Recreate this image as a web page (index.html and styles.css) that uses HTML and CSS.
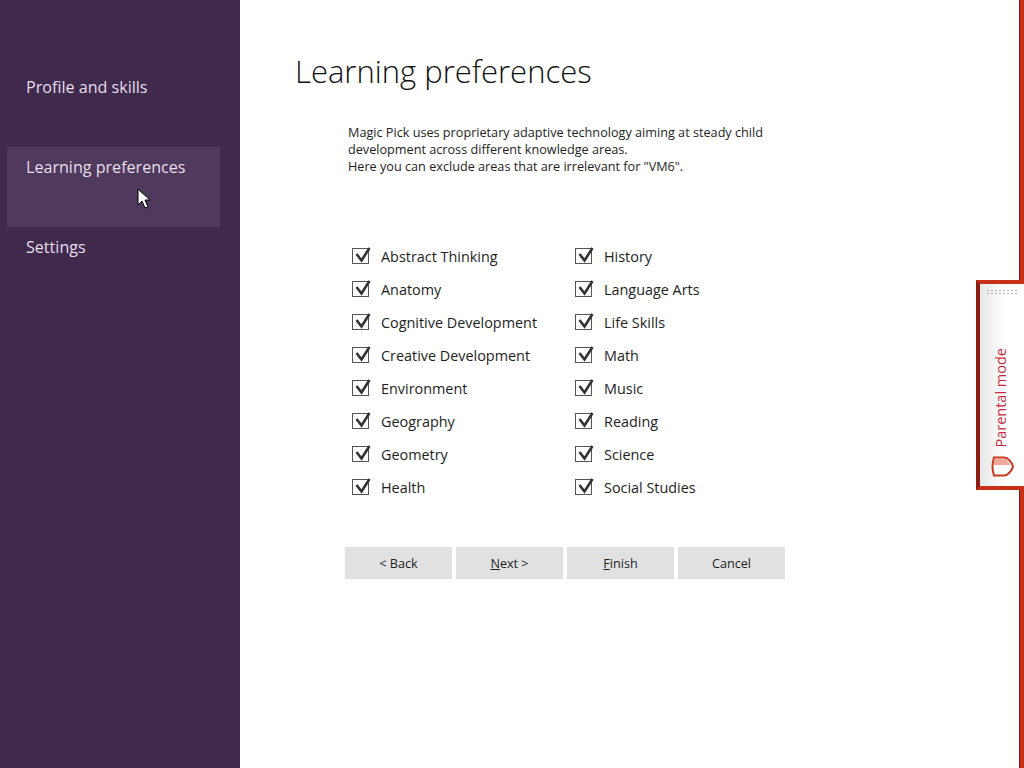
FILE: index.html
```html
<!DOCTYPE html>
<html>
    <head>
        <meta charset="UTF-8">
        <title>Learning preferences</title>
        <link rel="stylesheet" href="styles.css">
    </head>
    <body>
        <nav class="sidebar">
            <div class="nav-item">Profile and skills</div>
            <div class="nav-item active">Learning preferences</div>
            <div class="nav-item">Settings</div>
        </nav>

        <main class="content">
            <h1>Learning preferences</h1>

            <div class="wizard">
                <p class="intro">Magic Pick uses proprietary adaptive technology aiming at steady child<br>development across different knowledge areas.<br>Here you can exclude areas that are irrelevant for "VM6".</p>

                <div class="areas">
                    <label class="area"><span class="box"><svg viewBox="0 0 20 20"><path d="M3.500 8l5 6.500L16.500 2" /></svg></span>Abstract Thinking</label>
                    <label class="area"><span class="box"><svg viewBox="0 0 20 20"><path d="M3.500 8l5 6.500L16.500 2" /></svg></span>History</label>
                    <label class="area"><span class="box"><svg viewBox="0 0 20 20"><path d="M3.500 8l5 6.500L16.500 2" /></svg></span>Anatomy</label>
                    <label class="area"><span class="box"><svg viewBox="0 0 20 20"><path d="M3.500 8l5 6.500L16.500 2" /></svg></span>Language Arts</label>
                    <label class="area"><span class="box"><svg viewBox="0 0 20 20"><path d="M3.500 8l5 6.500L16.500 2" /></svg></span>Cognitive Development</label>
                    <label class="area"><span class="box"><svg viewBox="0 0 20 20"><path d="M3.500 8l5 6.500L16.500 2" /></svg></span>Life Skills</label>
                    <label class="area"><span class="box"><svg viewBox="0 0 20 20"><path d="M3.500 8l5 6.500L16.500 2" /></svg></span>Creative Development</label>
                    <label class="area"><span class="box"><svg viewBox="0 0 20 20"><path d="M3.500 8l5 6.500L16.500 2" /></svg></span>Math</label>
                    <label class="area"><span class="box"><svg viewBox="0 0 20 20"><path d="M3.500 8l5 6.500L16.500 2" /></svg></span>Environment</label>
                    <label class="area"><span class="box"><svg viewBox="0 0 20 20"><path d="M3.500 8l5 6.500L16.500 2" /></svg></span>Music</label>
                    <label class="area"><span class="box"><svg viewBox="0 0 20 20"><path d="M3.500 8l5 6.500L16.500 2" /></svg></span>Geography</label>
                    <label class="area"><span class="box"><svg viewBox="0 0 20 20"><path d="M3.500 8l5 6.500L16.500 2" /></svg></span>Reading</label>
                    <label class="area"><span class="box"><svg viewBox="0 0 20 20"><path d="M3.500 8l5 6.500L16.500 2" /></svg></span>Geometry</label>
                    <label class="area"><span class="box"><svg viewBox="0 0 20 20"><path d="M3.500 8l5 6.500L16.500 2" /></svg></span>Science</label>
                    <label class="area"><span class="box"><svg viewBox="0 0 20 20"><path d="M3.500 8l5 6.500L16.500 2" /></svg></span>Health</label>
                    <label class="area"><span class="box"><svg viewBox="0 0 20 20"><path d="M3.500 8l5 6.500L16.500 2" /></svg></span>Social Studies</label>
                </div>

                <div class="buttons">
                    <button>&lt; Back</button>
                    <button><u>N</u>ext &gt;</button>
                    <button><u>F</u>inish</button>
                    <button>Cancel</button>
                </div>
            </div>
        </main>

        <svg class="cursor" width="14" height="22" viewBox="0 0 14 22">
            <path d="M1 1v16l4-4 3 7 3-1-3-7h5z" fill="#fff" stroke="#000" stroke-width="1" />
        </svg>

        <div class="parental-tab">
            <div class="grip"></div>
            <span class="tab-label">Parental mode</span>
            <svg class="tab-icon" width="24" height="21" viewBox="0 0 24 21">
                <path d="M4 1.500h10c4 0 8 5 9 9-1 4-5 9-9 9H4c-2-6-2-12 0-18z" fill="#fff" stroke="#c8391f" stroke-width="2" />
                <path d="M5 3h9c2 0 5 3 6 6H4c0-2 0-4 1-6z" fill="#f0a898" />
            </svg>
        </div>
    </body>
</html>
```

FILE: styles.css
```css
body {
    display: flex;
    height: 768px;
    margin: 0;
    overflow: hidden;
    position: relative;
    font-family: "Open Sans", "Noto Sans", sans-serif;
    color: #1e1e1e;
    background-color: #ffffff;
}

.sidebar {
    width: 240px;
    flex-shrink: 0;
    box-sizing: border-box;
    padding: 67px 20px 0 7px;
    background-color: #3f2a4e;
}

.nav-item {
    height: 80px;
    box-sizing: border-box;
    padding: 8px 0 0 19px;
    font-size: 16.1px;
    line-height: 24px;
    color: #e6dfea;
}

.nav-item.active {
    background-color: #4f3a5e;
}

.content {
    flex: 1;
    box-sizing: border-box;
    padding: 49px 0 0 55px;
    border-right: 4px solid #c8301a;
    box-shadow: inset -1px 0 0 #7a1a0c;
}

h1 {
    margin: 0;
    font-size: 31px;
    font-weight: 300;
    line-height: 44px;
    color: #111111;
}

.wizard {
    width: 440px;
    margin-left: 50px;
}

.intro {
    margin: 31px 0 0 3px;
    font-size: 12.66px;
    line-height: 17px;
}

.areas {
    display: grid;
    grid-template-columns: 223px 1fr;
    grid-auto-rows: 33px;
    margin: 65px 0 0 7px;
}

.area {
    display: flex;
    align-items: center;
    gap: 12px;
    font-size: 14.4px;
}

.box {
    width: 15px;
    height: 14px;
    flex-shrink: 0;
    position: relative;
    margin-top: -2px;
    border: 1px solid #555555;
}

.box svg {
    position: absolute;
    left: 0;
    top: -3px;
    width: 20px;
    height: 20px;
    fill: none;
    stroke: #333333;
    stroke-width: 2.6;
}

.buttons {
    display: flex;
    gap: 4px;
    margin-top: 43px;
}

button {
    width: 107px;
    height: 32px;
    border: none;
    padding: 0;
    background-color: #e1e1e1;
    font-family: inherit;
    font-size: 12.6px;
    color: #1e1e1e;
}

.cursor {
    position: absolute;
    left: 137px;
    top: 188px;
}

.parental-tab {
    position: absolute;
    left: 976px;
    top: 280px;
    width: 48px;
    height: 210px;
    box-sizing: border-box;
    display: flex;
    flex-direction: column;
    align-items: center;
    padding: 5px 0 9px;
    border: 4px solid #c8301a;
    border-right: none;
    border-left-color: #8e1f10;
    background: linear-gradient(90deg, #e6e9e7, #ffffff 60%);
}

.grip {
    width: 32px;
    height: 6px;
    background-image: radial-gradient(#bbbbbb 1px, transparent 1.5px);
    background-size: 4px 3px;
}

.tab-label {
    margin-top: auto;
    margin-bottom: 8px;
    margin-right: 2px;
    writing-mode: vertical-rl;
    transform: rotate(180deg);
    font-size: 14.5px;
    line-height: 20px;
    color: #c9283a;
}

.tab-icon {
    flex-shrink: 0;
}
```
